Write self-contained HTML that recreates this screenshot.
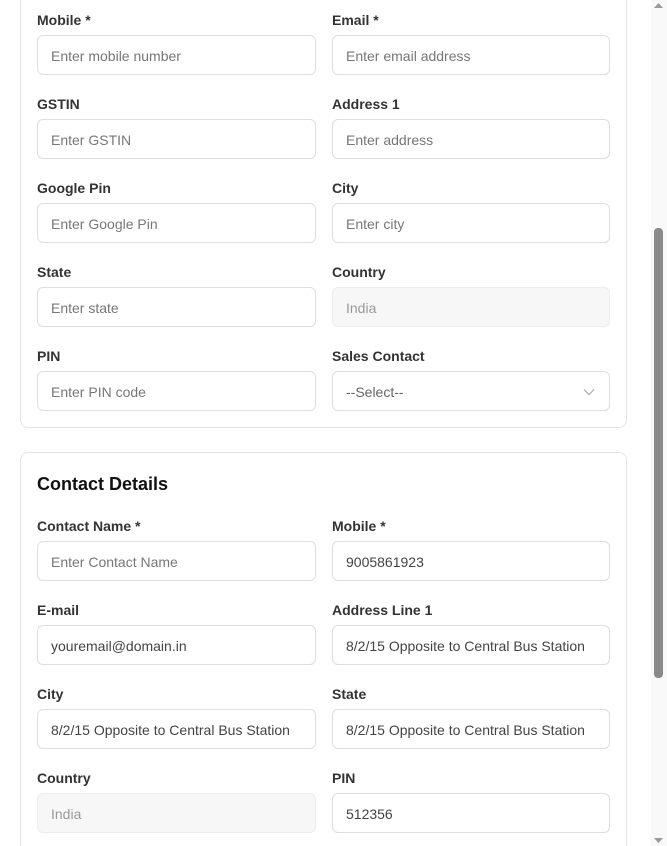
<!DOCTYPE html>
<html><head><meta charset="utf-8"><style>
*{box-sizing:border-box;margin:0;padding:0}
html,body{width:667px;height:846px;overflow:hidden;background:#fff;font-family:"Liberation Sans",sans-serif}
#w{position:relative;width:667px;height:846px;overflow:hidden}
.card{position:absolute;left:20px;width:607px;border:1px solid #e3e3e3;border-radius:8px;background:#fff}
.lbl{position:absolute;font-size:14px;font-weight:bold;color:#333;line-height:16px}
.inp{position:absolute;width:279px;height:40px;border:1px solid #dedede;border-radius:6px;font-size:14px;color:#777;padding-left:13px;line-height:40px;background:#fff;white-space:nowrap;overflow:hidden}
.v{color:#444}
.dis{background:#f7f7f7;border-color:#ececec;color:#999}
h2{position:absolute;left:37px;top:474px;font-size:18px;font-weight:bold;color:#111}
.sb{position:absolute;left:651px;top:0;width:16px;height:846px;background:#f9f9f9}
.th{position:absolute;left:654px;top:228px;width:9px;height:450px;background:#8a8a8a;border-radius:4px}
</style></head><body><div id="w">
<div class="card" style="top:-20px;height:448px"></div>
<div class="card" style="top:452px;height:420px"></div>

<div class="lbl" style="left:37px;top:12px">Mobile *</div>
<div class="lbl" style="left:332px;top:12px">Email *</div>
<div class="inp" style="left:37px;top:35px">Enter mobile number</div>
<div class="inp" style="left:332px;top:35px;width:278px">Enter email address</div>

<div class="lbl" style="left:37px;top:96px">GSTIN</div>
<div class="lbl" style="left:332px;top:96px">Address 1</div>
<div class="inp" style="left:37px;top:119px">Enter GSTIN</div>
<div class="inp" style="left:332px;top:119px;width:278px">Enter address</div>

<div class="lbl" style="left:37px;top:180px">Google Pin</div>
<div class="lbl" style="left:332px;top:180px">City</div>
<div class="inp" style="left:37px;top:203px">Enter Google Pin</div>
<div class="inp" style="left:332px;top:203px;width:278px">Enter city</div>

<div class="lbl" style="left:37px;top:264px">State</div>
<div class="lbl" style="left:332px;top:264px">Country</div>
<div class="inp" style="left:37px;top:287px">Enter state</div>
<div class="inp dis" style="left:332px;top:287px;width:278px">India</div>

<div class="lbl" style="left:37px;top:348px">PIN</div>
<div class="lbl" style="left:332px;top:348px">Sales Contact</div>
<div class="inp" style="left:37px;top:371px">Enter PIN code</div>
<div class="inp" style="left:332px;top:371px;width:278px;color:#666">--Select--
<svg style="position:absolute;right:14px;top:16px" width="12" height="8" viewBox="0 0 12 8"><path d="M1 1.5l5 5 5-5" fill="none" stroke="#aaa" stroke-width="1.2"/></svg></div>

<h2>Contact Details</h2>

<div class="lbl" style="left:37px;top:518px">Contact Name *</div>
<div class="lbl" style="left:332px;top:518px">Mobile *</div>
<div class="inp" style="left:37px;top:541px">Enter Contact Name</div>
<div class="inp v" style="left:332px;top:541px;width:278px">9005861923</div>

<div class="lbl" style="left:37px;top:602px">E-mail</div>
<div class="lbl" style="left:332px;top:602px">Address Line 1</div>
<div class="inp v" style="left:37px;top:625px">youremail@domain.in</div>
<div class="inp v" style="left:332px;top:625px;width:278px">8/2/15 Opposite to Central Bus Station</div>

<div class="lbl" style="left:37px;top:686px">City</div>
<div class="lbl" style="left:332px;top:686px">State</div>
<div class="inp v" style="left:37px;top:709px">8/2/15 Opposite to Central Bus Station</div>
<div class="inp v" style="left:332px;top:709px;width:278px">8/2/15 Opposite to Central Bus Station</div>

<div class="lbl" style="left:37px;top:770px">Country</div>
<div class="lbl" style="left:332px;top:770px">PIN</div>
<div class="inp dis" style="left:37px;top:793px">India</div>
<div class="inp v" style="left:332px;top:793px;width:278px">512356</div>

<div class="sb"></div>
<div class="th"></div>
<svg style="position:absolute;left:654px;top:3px" width="9" height="5"><path d="M0 5L4.5 0 9 5z" fill="#999"/></svg>
<svg style="position:absolute;left:654px;top:838px" width="9" height="5"><path d="M0 0L4.5 5 9 0z" fill="#999"/></svg>
</div></body></html>
